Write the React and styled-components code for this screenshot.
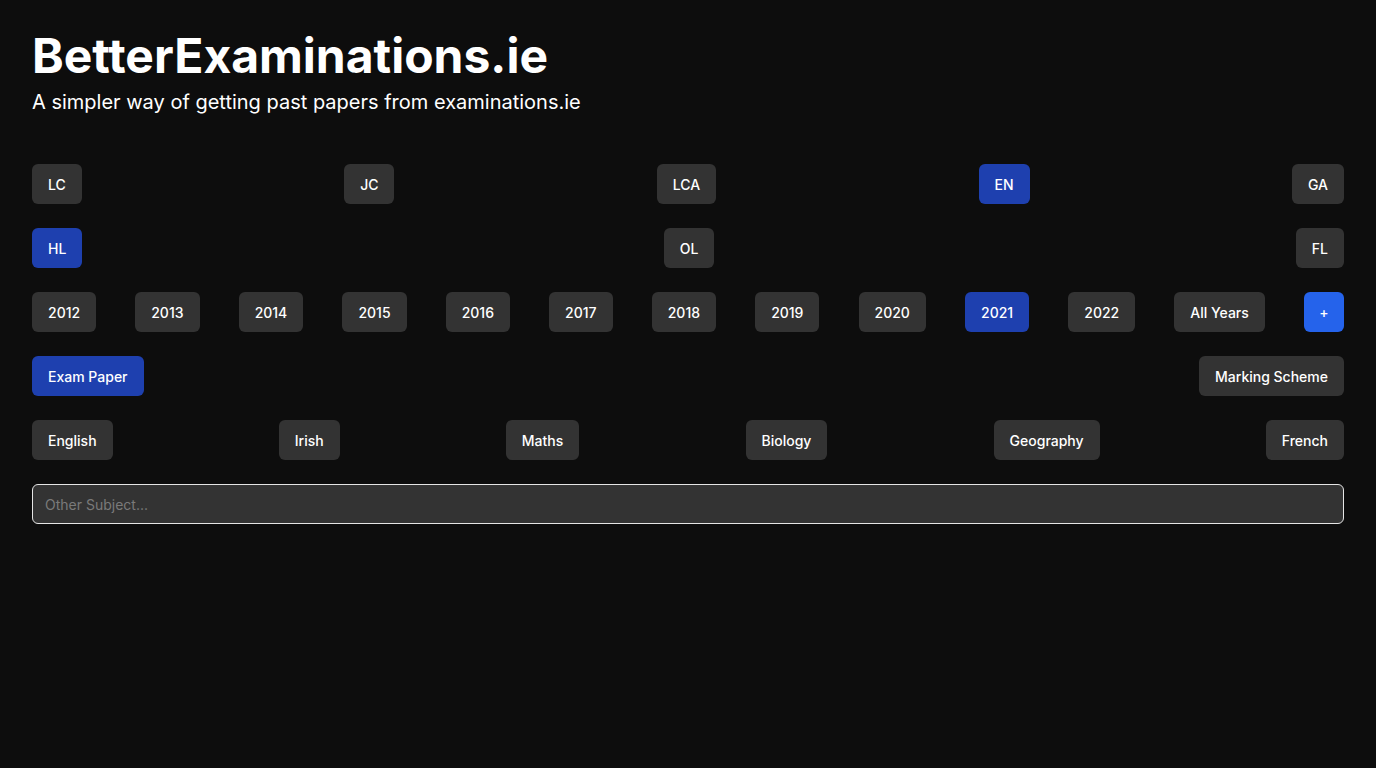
import React, { useState } from "react";
import styled, { createGlobalStyle } from "styled-components";

const LEVELS = ["LC", "JC", "LCA", "EN", "GA"];
const TIERS = ["HL", "OL", "FL"];
const YEARS = ["2012", "2013", "2014", "2015", "2016", "2017", "2018", "2019", "2020", "2021", "2022", "All Years"];
const TYPES = ["Exam Paper", "Marking Scheme"];
const SUBJECTS = ["English", "Irish", "Maths", "Biology", "Geography", "French"];

const App = () => {
  const [level, setLevel] = useState("EN");
  const [tier, setTier] = useState("HL");
  const [year, setYear] = useState("2021");
  const [type, setType] = useState("Exam Paper");
  const [subject, setSubject] = useState("");

  return (
    <>
      <GlobalStyle />
      <Page>
        <Header>
          <Title>BetterExaminations.ie</Title>
          <Subtitle>A simpler way of getting past papers from examinations.ie</Subtitle>
        </Header>
        <Options>
          <Row>
            {LEVELS.map((l) => (
              <Choice key={l} active={l === level} onClick={() => setLevel(l)}>
                {l}
              </Choice>
            ))}
          </Row>
          <Row>
            {TIERS.map((t) => (
              <Choice key={t} active={t === tier} onClick={() => setTier(t)}>
                {t}
              </Choice>
            ))}
          </Row>
          <Row>
            {YEARS.map((y) => (
              <Choice key={y} active={y === year} onClick={() => setYear(y)}>
                {y}
              </Choice>
            ))}
            <AddButton>+</AddButton>
          </Row>
          <Row>
            {TYPES.map((t) => (
              <Choice key={t} active={t === type} onClick={() => setType(t)}>
                {t}
              </Choice>
            ))}
          </Row>
          <Row>
            {SUBJECTS.map((s) => (
              <Choice key={s} active={s === subject} onClick={() => setSubject(s)}>
                {s}
              </Choice>
            ))}
          </Row>
          <SubjectInput placeholder="Other Subject..." />
        </Options>
      </Page>
    </>
  );
};

const GlobalStyle = createGlobalStyle`
  html, body {
    margin: 0;
    background: #0d0d0d;
    color: #ffffff;
    font-family: Inter, "Noto Sans", sans-serif;
  }
`;

const Page = styled.div`
  min-height: 100vh;
  box-sizing: border-box;
  padding: 28px 32px 32px;
  display: flex;
  flex-direction: column;
  gap: 48px;
`;

const Header = styled.header`
  display: flex;
  flex-direction: column;
  gap: 4px;
`;

const Title = styled.h1`
  margin: 0;
  font-size: 48px;
  font-weight: 700;
  line-height: 56px;
`;

const Subtitle = styled.p`
  margin: 0;
  font-size: 20px;
  line-height: 28px;
  font-weight: 400;
`;

const Options = styled.div`
  display: flex;
  flex-direction: column;
  gap: 24px;
`;

const Row = styled.div`
  display: flex;
  justify-content: space-between;
  align-items: center;
`;

const Choice = styled.button`
  height: 40px;
  padding: 0 16px;
  border: none;
  border-radius: 6px;
  background: ${(props) => (props.active ? "#1e40af" : "#333333")};
  color: #ffffff;
  font-family: Inter, "Noto Sans", sans-serif;
  font-size: 14px;
  font-weight: 500;
  cursor: pointer;
`;

const AddButton = styled(Choice)`
  width: 40px;
  padding: 0;
  background: #2563eb;
`;

const SubjectInput = styled.input`
  height: 40px;
  box-sizing: border-box;
  padding: 0 12px;
  border: 1px solid #e5e5e5;
  border-radius: 6px;
  background: #333333;
  color: #ffffff;
  font-family: Inter, "Noto Sans", sans-serif;
  font-size: 14px;
  outline: none;

  &::placeholder {
    color: #7a7a7a;
  }
`;

export default App;
